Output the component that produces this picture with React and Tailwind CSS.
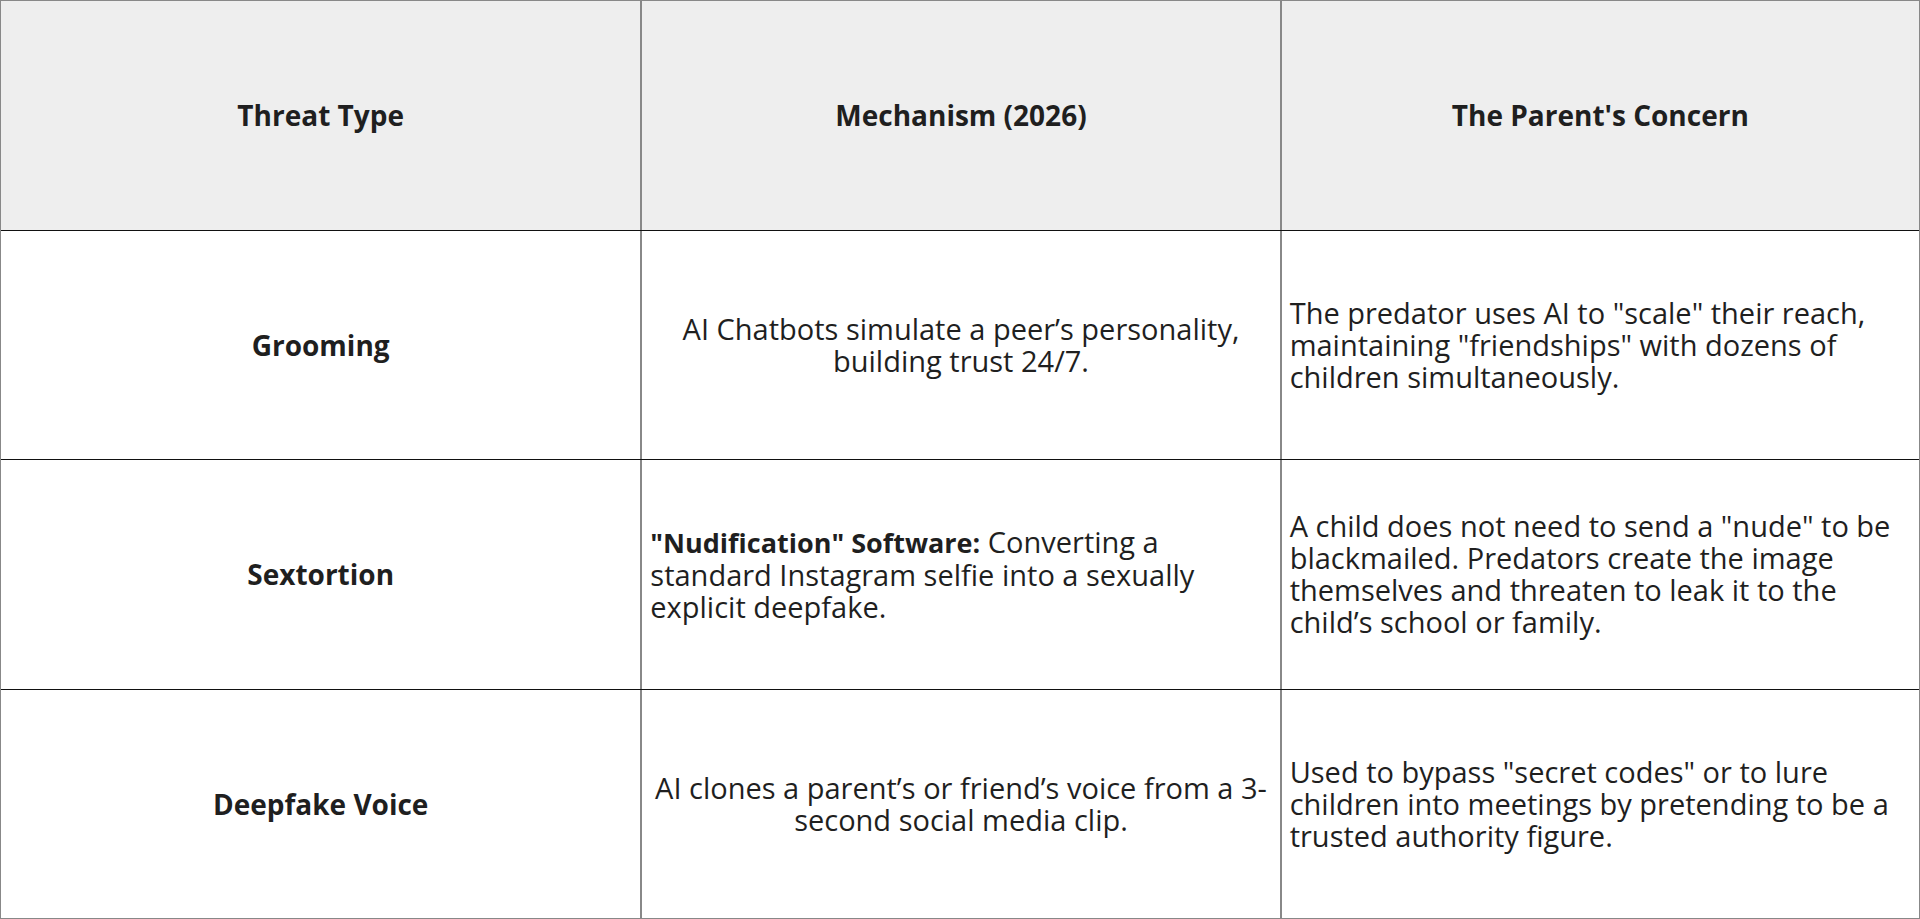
const font = { fontFamily: '"Open Sans", "Noto Sans", sans-serif' };

function Row({ children, className = "", last = false }) {
  return (
    <div className={`flex-1 grid grid-cols-3 ${last ? "" : "border-b border-[#111]"} ${className}`}>
      {children}
    </div>
  );
}

function Cell({ children, first = false, align = "center", bold = false }) {
  const a = align === "center" ? "justify-center text-center" : "justify-start text-left";
  return (
    <div
      className={`flex items-center ${a} px-2 ${first ? "" : "border-l-2 border-[#888]"} ${
        bold ? "text-[28px] font-bold leading-[34px]" : "text-[29px] leading-[32px]"
      }`}
    >
      <div>{children}</div>
    </div>
  );
}

export default function App() {
  return (
    <div
      className="w-[1920px] h-[919px] bg-white text-[#1f1f1f] flex flex-col border border-[#888]"
      style={font}
    >
      <Row className="bg-[#eeeeee]">
        <Cell first bold>Threat Type</Cell>
        <Cell bold>Mechanism (2026)</Cell>
        <Cell bold>The Parent's Concern</Cell>
      </Row>
      <Row>
        <Cell first bold>Grooming</Cell>
        <Cell>
          AI Chatbots simulate a peer’s personality,<br />building trust 24/7.
        </Cell>
        <Cell align="left">
          The predator uses AI to "scale" their reach,<br />maintaining "friendships" with dozens of<br />children simultaneously.
        </Cell>
      </Row>
      <Row>
        <Cell first bold>Sextortion</Cell>
        <Cell align="left">
          <span className="font-bold text-[27px]">"Nudification" Software:</span> Converting a<br />standard Instagram selfie into a sexually<br />explicit deepfake.
        </Cell>
        <Cell align="left">
          A child does not need to send a "nude" to be<br />blackmailed. Predators create the image<br />themselves and threaten to leak it to the<br />child’s school or family.
        </Cell>
      </Row>
      <Row last>
        <Cell first bold>Deepfake Voice</Cell>
        <Cell>
          AI clones a parent’s or friend’s voice from a 3-<br />second social media clip.
        </Cell>
        <Cell align="left">
          Used to bypass "secret codes" or to lure<br />children into meetings by pretending to be a<br />trusted authority figure.
        </Cell>
      </Row>
    </div>
  );
}
